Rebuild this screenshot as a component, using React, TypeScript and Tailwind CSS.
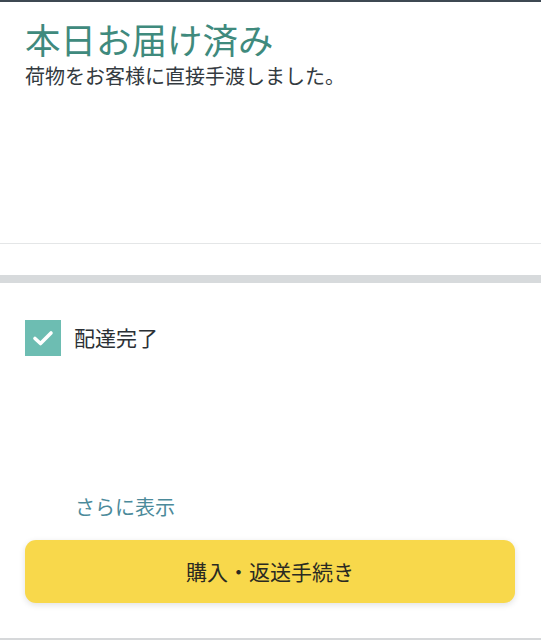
import React from 'react';

const font = { fontFamily: '"Noto Sans CJK JP", "Noto Sans", sans-serif' };

export default function App() {
  return (
    <div className="w-[541px] h-[640px] bg-white border-t-2 border-[#3d4852] flex flex-col overflow-hidden" style={font}>
      <div className="h-[242px] px-[25px] pt-[15px] border-b border-[#e4e6e7] shrink-0">
        <h1 className="text-[35.5px] leading-[44px] text-[#3f8a7d] font-normal">本日お届け済み</h1>
        <p className="text-[20px] leading-[26px] text-[#333a40] mt-[2px]">荷物をお客様に直接手渡しました。</p>
      </div>
      <div className="h-[31px] shrink-0" />
      <div className="h-[8px] bg-[#d7dadc] shrink-0" />
      <div className="flex-1 flex flex-col px-[25px]">
        <div className="flex items-center gap-[13px] mt-[37px]">
          <div className="w-[36px] h-[36px] bg-[#6dbdb2] flex items-center justify-center">
            <svg width="22" height="18" viewBox="0 0 22 18" fill="none">
              <path d="M3 9.5 L8.5 14.5 L19 4" stroke="white" strokeWidth="3.6" strokeLinecap="round" strokeLinejoin="round" />
            </svg>
          </div>
          <span className="text-[21px] text-[#2b3035]">配達完了</span>
        </div>
        <div className="mt-auto">
          <button className="ml-[50px] text-[20px] leading-[26px] text-[#4b8a9a]">さらに表示</button>
          <button className="mt-[20px] w-[490px] h-[63px] rounded-[11px] bg-[#f8d84b] text-[21px] text-[#2a2a22] shadow-[0_2px_6px_rgba(0,0,0,0.12)] flex items-center justify-center">
            購入・返送手続き
          </button>
        </div>
        <div className="h-[35px] shrink-0" />
      </div>
      <div className="h-[2px] bg-[#d6d8da] shrink-0" />
    </div>
  );
}
